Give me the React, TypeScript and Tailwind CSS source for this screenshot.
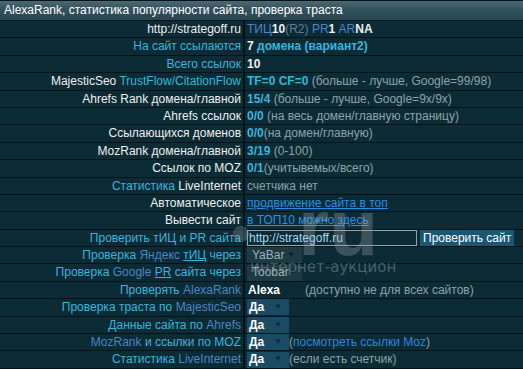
import React from "react";

const C = "text-[#35b6dc]"; // cyan
const B = "text-[#4d86c4]"; // blue
const W = "text-[#f0f0f0]"; // white
const G = "text-[#8fa2a8]"; // gray

function Row({ label, children }: { label: React.ReactNode; children?: React.ReactNode }) {
  return (
    <div className="flex h-[16.4px] gap-x-[2px]">
      <div className="w-[243px] shrink-0 bg-[#0c2b35] pr-[2px] text-right leading-[16.4px] whitespace-nowrap">{label}</div>
      <div className="flex-1 bg-[#0c2b35] pl-[2px] leading-[16.4px] whitespace-nowrap flex items-center">{children}</div>
    </div>
  );
}

function Sel({ text, wide, strong }: { text: string; wide?: boolean; strong?: boolean }) {
  return (
    <span
      className={
        "inline-flex items-center h-[16px] " +
        (wide
          ? "w-[55px] bg-[#1e3a43] text-[#9fb1b6] pl-[5px]"
          : strong
          ? "w-[52px] text-white font-bold pl-[1px]"
          : "w-[42px] bg-[#1a4b62] text-white font-bold pl-[2px]")
      }
    >
      <span className="flex-1">{text}</span>
      <span className={"text-[8px] mr-[7px] " + (wide ? "text-[#0b1c22]" : "text-[#0c2a3c]")}>▼</span>
    </span>
  );
}

export default function App() {
  return (
    <div
      className="relative w-[523px] h-[369px] overflow-hidden bg-[#031319] text-[12px] text-[#f0f0f0]"
      style={{ fontFamily: '"Liberation Sans", Arial, sans-serif' }}
    >
      <div className="flex flex-col gap-y-[1px] pt-[1px]">
        <div className="h-[19px] bg-gradient-to-b from-[#4b6872] via-[#31505a] to-[#2b4650] pl-[4px] leading-[19px] text-white">
          AlexaRank, статистика популярности сайта, проверка траста
        </div>
        <Row label={<span className={W}>http://strategoff.ru</span>}>
          <span className={B}>ТИЦ</span>
          <b className={W}>10</b>
          <span className="text-[#5a7e9a]">(R2)</span>
          <span className={B}>&nbsp;PR</span>
          <b className={W}>1</b>
          <span className={B}>&nbsp;AR</span>
          <b className={W}>NA</b>
        </Row>
        <Row label={<span className={C}>На сайт ссылаются</span>}>
          <b className={W}>7&nbsp;</b>
          <b className={C}>домена (вариант2)</b>
        </Row>
        <Row label={<span className={C}>Всего ссылок</span>}>
          <b className={W}>10</b>
        </Row>
        <Row label={<><span className={W}>MajesticSeo </span><span className={C}>TrustFlow/CitationFlow</span></>}>
          <b className={C}>TF=0 CF=0&nbsp;</b>
          <span className={G}>(больше - лучше, Google=99/98)</span>
        </Row>
        <Row label={<span className={W}>Ahrefs Rank домена/главной</span>}>
          <b className={C}>15/4&nbsp;</b>
          <span className={G}>(больше - лучше, Google=9x/9x)</span>
        </Row>
        <Row label={<span className={W}>Ahrefs ссылок</span>}>
          <b className={C}>0/0&nbsp;</b>
          <span className={G}>(на весь домен/главную страницу)</span>
        </Row>
        <Row label={<span className={W}>Ссылающихся доменов</span>}>
          <b className={C}>0/0</b>
          <span className={G}>(на домен/главную)</span>
        </Row>
        <Row label={<span className={W}>MozRank домена/главной</span>}>
          <b className={C}>3/19&nbsp;</b>
          <span className={G}>(0-100)</span>
        </Row>
        <Row label={<span className={W}>Ссылок по MOZ</span>}>
          <b className={C}>0/1</b>
          <span className={G}>(учитывемых/всего)</span>
        </Row>
        <Row label={<><span className={C}>Статистика </span><span className={W}>LiveInternet</span></>}>
          <span className={G}>счетчика нет</span>
        </Row>
        <Row label={<span className={W}>Автоматическое</span>}>
          <span className="text-[#2a8fe0] underline">продвижение сайта в топ</span>
        </Row>
        <Row label={<span className={W}>Вывести сайт</span>}>
          <span className="text-[#2a8fe0] underline">в ТОП10 можно здесь</span>
        </Row>
        <Row label={<span className={C}>Проверить тИЦ и PR сайта</span>}>
          <span className="inline-flex items-center w-[170px] h-[16px] border border-[#8ea3aa] pl-[1px] text-[#a8dcf2]">
            http://strategoff.ru
          </span>
          <span className="ml-[3px] inline-flex items-center h-[16px] px-[3px] bg-[#1d5672] text-white">
            Проверить сайт
          </span>
        </Row>
        <Row label={<><span className={C}>Проверка </span><span className={B}>Яндекс </span><span className={C + " underline"}>тИЦ</span><span className={C}> через</span></>}>
          <Sel text="YaBar" wide />
        </Row>
        <Row label={<><span className={C}>Проверка </span><span className={B}>Google </span><span className={C + " underline"}>PR</span><span className={C}> сайта через</span></>}>
          <Sel text="Toobar" wide />
        </Row>
        <Row label={<><span className={C}>Проверять </span><span className={B}>AlexaRank</span></>}>
          <Sel text="Alexa" strong />
          <span className={G + " ml-[6px]"}>(доступно не для всех сайтов)</span>
        </Row>
        <Row label={<><span className={C}>Проверка траста по </span><span className={B}>MajesticSeo</span></>}>
          <Sel text="Да" />
        </Row>
        <Row label={<><span className={C}>Данные сайта по </span><span className={B}>Ahrefs</span></>}>
          <Sel text="Да" />
        </Row>
        <Row label={<><span className={B}>MozRank </span><span className={C}>и ссылки по MOZ</span></>}>
          <Sel text="Да" />
          <span className={G}>(</span>
          <span className="text-[#2f86d8]">посмотреть ссылки Moz</span>
          <span className={G}>)</span>
        </Row>
        <Row label={<><span className={C}>Статистика </span><span className={B}>LiveInternet</span></>}>
          <Sel text="Да" />
          <span className={G}>(если есть счетчик)</span>
        </Row>
      </div>

      {/* watermark overlay */}
      <div className="pointer-events-none absolute left-[232px] top-[180px] w-[160px] h-[100px]">
        <div className="absolute left-[1px] top-[46px] w-[16px] h-[16px] rounded-full bg-[#9aa6aa] opacity-30" />
        <div className="absolute left-[66px] top-[8px] text-[80px] font-bold leading-none text-[#a3b0b4] opacity-30 whitespace-nowrap">
          ru
        </div>
        <div
          className="absolute left-[18px] top-[80px] text-[15px] leading-none text-[#a3b0b4] opacity-40 whitespace-nowrap"
          style={{ fontFamily: '"DejaVu Sans", sans-serif' }}
        >
          интернет-аукцион
        </div>
      </div>
    </div>
  );
}
